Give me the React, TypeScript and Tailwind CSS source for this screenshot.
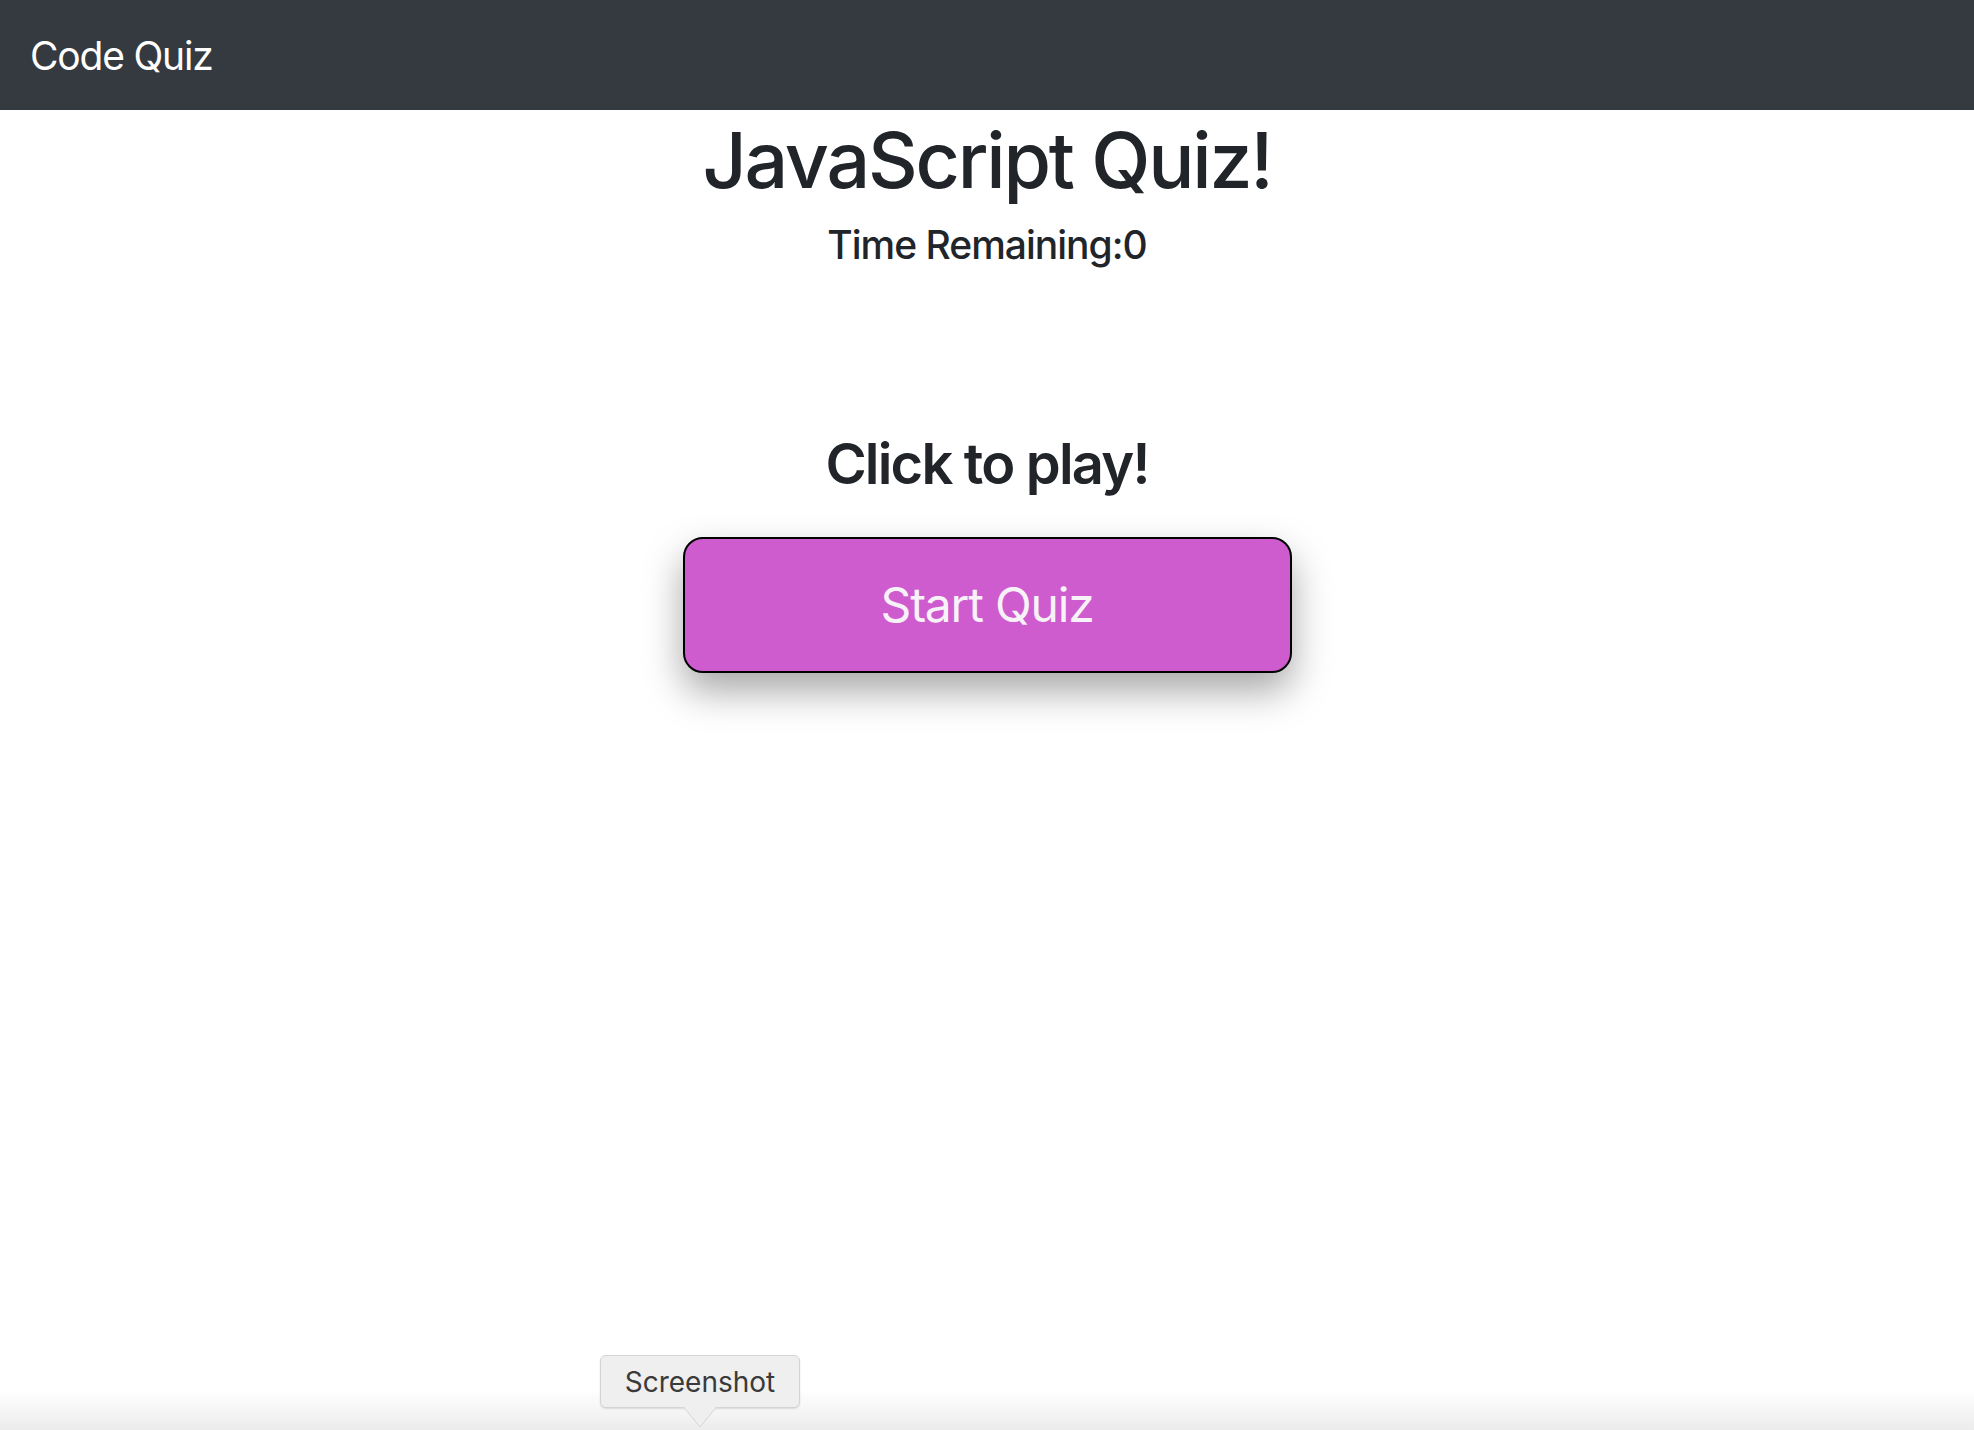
import React from "react";

export default function App() {
  return (
    <div
      className="relative w-full h-[1430px] bg-white overflow-hidden text-[#212529]"
      style={{ fontFamily: "Inter, 'Noto Sans', 'Liberation Sans', sans-serif" }}
    >
      <nav className="h-[110px] bg-[#343a40] flex items-center px-[30px]">
        <span className="text-white text-[39px] leading-none tracking-[-1.2px]">Code Quiz</span>
      </nav>

      <div className="flex flex-col items-center">
        <h1 className="text-[77px] leading-[96px] font-medium mt-[2px] tracking-[-2.2px]">JavaScript Quiz!</h1>
        <h5 className="text-[39px] leading-[48px] font-medium mt-[13px] tracking-[-1px]">Time Remaining:0</h5>
        <h3 className="text-[56px] leading-[67px] font-semibold mt-[162px] tracking-[-1.8px]">Click to play!</h3>
        <button className="mt-[39px] w-[609px] h-[136px] rounded-[20px] border-2 border-black bg-[#cf5ccf] text-[#f7f2f7] text-[48px] tracking-[-1.2px] shadow-[0_18px_38px_rgba(0,0,0,0.35)] flex items-center justify-center">
          Start Quiz
        </button>
      </div>

      <div className="absolute left-0 right-0 bottom-0 h-[40px] bg-gradient-to-b from-white to-[#ececec]" />

      <div className="absolute left-[600px] top-[1355px] w-[200px] h-[53px] rounded-[6px] bg-[#efefef] border border-[#d4d4d4] shadow-[0_1px_2px_rgba(0,0,0,0.12)] flex items-center justify-center">
        <span className="text-[28px] text-[#3a3a3a] leading-none">Screenshot</span>
      </div>
      <svg className="absolute left-[684px] top-[1407px]" width="32" height="22" viewBox="0 0 32 22">
        <path d="M0 0.5 L16 20 L32 0.5" fill="#efefef" stroke="#d4d4d4" strokeWidth="1" />
        <rect x="1" y="0" width="30" height="1.5" fill="#efefef" />
      </svg>
    </div>
  );
}
